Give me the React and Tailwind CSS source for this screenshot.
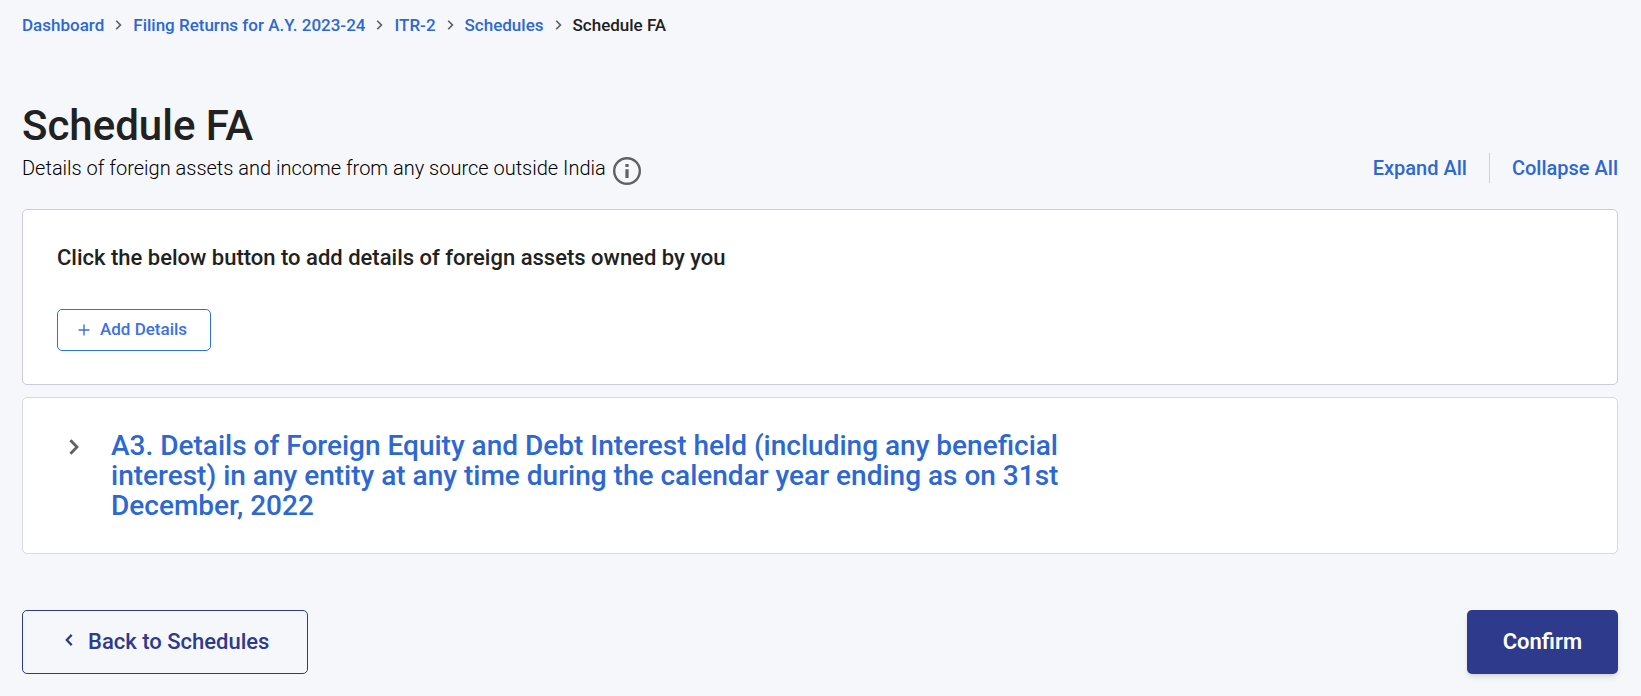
const trail = ["Dashboard", "Filing Returns for A.Y. 2023-24", "ITR-2", "Schedules"];

function Chevron({ className, width = 2, left = false }) {
  return (
    <svg className={className} viewBox="0 0 10 16" fill="none" stroke="currentColor" strokeWidth={width} aria-hidden="true">
      <path d={left ? "M8.6 1.2 L2 8 L8.6 14.8" : "M1.4 1.2 L8 8 L1.4 14.8"} />
    </svg>
  );
}

export default function App() {
  return (
    <div className="min-h-screen bg-[#f6f7fb] pr-[23px] pb-[22px] pl-[22px] pt-[11px] font-[Roboto,'Liberation_Sans',sans-serif] text-[#212121]">
      <nav aria-label="Breadcrumb">
        <ol className="flex flex-wrap items-center text-[17px] leading-7 font-medium">
          {trail.map((name) => (
            <li key={name} className="flex items-center">
              <a href="#" className="text-[#2d68d2]">{name}</a>
              <Chevron className="mx-[11px] h-[10px] w-[7px] text-[#616161]" width={2.8} />
            </li>
          ))}
          <li aria-current="page">Schedule FA</li>
        </ol>
      </nav>

      <h1 className="mt-[62px] text-[42px] leading-[50px] font-medium">Schedule FA</h1>

      <div className="flex flex-wrap items-center justify-between">
        <div className="flex items-center gap-[6px]">
          <p className="text-xl leading-8 font-light text-black">Details of foreign assets and income from any source outside India</p>
          <button type="button" aria-label="More information" className="pt-1 text-[#616161]">
            <svg className="size-[30px]" viewBox="0 0 30 30" fill="none" aria-hidden="true">
              <circle cx="15" cy="16" r="12.8" stroke="currentColor" strokeWidth="2.4" />
              <path d="M13.4 9h3.2v3h-3.2zM13.4 14.2h3.2V23h-3.2z" fill="currentColor" />
            </svg>
          </button>
        </div>
        <div className="flex items-center text-xl leading-[30px] font-medium text-[#2d68d2]">
          <button type="button" className="border-r border-[#cfcfe6] pr-[22px]">Expand All</button>
          <button type="button" className="pl-[22px]">Collapse All</button>
        </div>
      </div>

      <main className="mt-6 flex flex-col gap-3">
        <section className="rounded-[5px] border border-[#cacbe3] bg-white px-[34px] py-[33px]">
          <h2 className="text-[22px] leading-[30px] font-medium">Click the below button to add details of foreign assets owned by you</h2>
          <button type="button" className="mt-9 flex h-[42px] items-center gap-[10px] rounded-[5px] border border-[#2d74da] pr-[23px] pl-5 text-[17px] font-medium text-[#3b72e0]">
            <svg className="size-3" viewBox="0 0 12 12" stroke="currentColor" strokeWidth="1.4" aria-hidden="true">
              <path d="M6 0.5v11M0.5 6h11" />
            </svg>
            Add Details
          </button>
        </section>

        <section className="rounded-[5px] border border-[#d5d9e8] bg-white">
          <button type="button" aria-expanded="false" className="flex w-full items-start gap-8 px-[46px] pt-[33px] pb-8 text-left">
            <Chevron className="mt-2 h-4 w-[10px] shrink-0 text-[#616161]" width={2.8} />
            <span className="max-w-[980px] text-[28px] leading-[30px] font-medium text-[#2d68d2]">
              A3. Details of Foreign Equity and Debt Interest held (including any beneficial interest) in any entity at any time during the calendar year ending as on 31st December, 2022
            </span>
          </button>
        </section>
      </main>

      <footer className="mt-14 flex flex-wrap justify-between">
        <button type="button" className="flex h-16 items-center gap-[15px] rounded-[5px] border border-[#2e3a8c] pr-[38px] pb-[2px] pl-[42px] text-[22px] font-medium text-[#2e3a8c]">
          <Chevron left className="mb-[2px] h-3 w-2" width={3} />
          Back to Schedules
        </button>
        <button type="button" className="h-16 rounded-[5px] bg-[#2e3a8c] px-9 pb-[2px] text-[22px] font-semibold text-white shadow-md">
          Confirm
        </button>
      </footer>
    </div>
  );
}
